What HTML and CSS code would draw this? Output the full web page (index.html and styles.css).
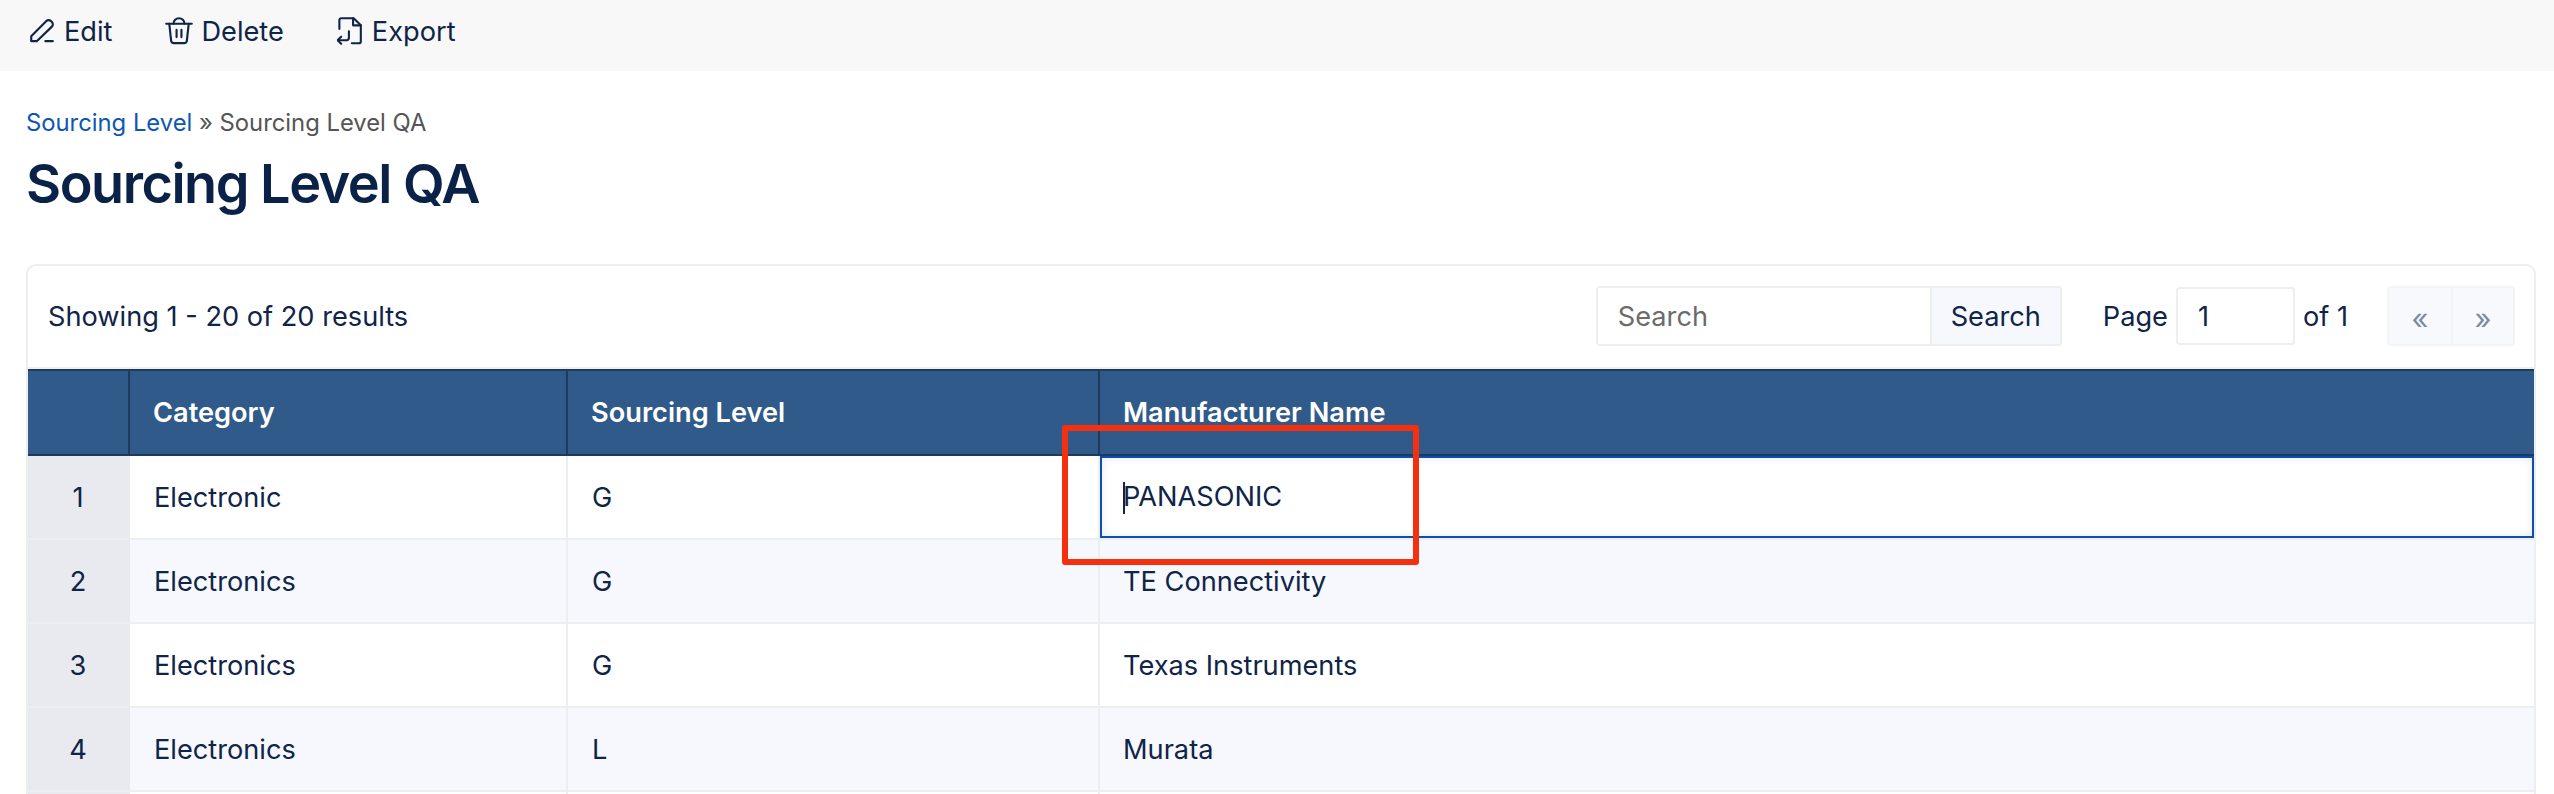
FILE: index.html
```html
<!DOCTYPE html>
<html lang="en">
<head>
<meta charset="utf-8">
<title>Sourcing Level QA</title>
<link rel="stylesheet" href="styles.css">
</head>
<body>
<nav class="actions">
  <a class="action action-edit">
    <svg class="icon icon-edit" viewBox="2.500 3 19.500 18.500"><path d="M3.500 20.500v-4L15.800 4.200a2.600 2.600 0 0 1 3.700 0l.8.8a2.600 2.600 0 0 1 0 3.700L8 20.500z"/><path d="M15 20.500h6"/></svg>
    <span>Edit</span>
  </a>
  <a class="action action-delete">
    <svg class="icon icon-delete" viewBox="0.500 0.500 23 23"><path d="M1.500 6h21"/><path d="M4 6l1.600 14.500a2 2 0 0 0 2 1.500h8.800a2 2 0 0 0 2-1.500L20 6"/><path d="M7.500 6C7.500 3.500 9.500 1.500 12 1.500s4.500 2 4.500 4.500"/><path d="M10 11v6M14 11v6"/></svg>
    <span>Delete</span>
  </a>
  <a class="action action-export">
    <svg class="icon icon-export" viewBox="1 1 21 23.500"><path d="M3 11V3.500A1.500 1.500 0 0 1 4.500 2H15l6 6v13.500a1.500 1.500 0 0 1-1.500 1.500h-6"/><path d="M14.500 2v6H21"/><path d="M11 13v5.500a2 2 0 0 1-2 2H1.500"/><path d="M4.500 17.500l-3 3 3 3"/></svg>
    <span>Export</span>
  </a>
</nav>

<main class="content">
  <p class="breadcrumb"><a class="crumb-link">Sourcing Level</a> » Sourcing Level QA</p>
  <h1 class="title">Sourcing Level QA</h1>

  <section class="card">
    <div class="card-bar">
      <span class="results">Showing 1 - 20 of 20 results</span>
      <div class="search">
        <input class="search-input" type="text" placeholder="Search">
        <button class="search-btn" type="button">Search</button>
      </div>
      <div class="page-jump">
        <span>Page</span>
        <input class="page-input" type="text" value="1">
        <span>of 1</span>
      </div>
      <div class="pager">
        <button class="pager-btn" type="button">«</button>
        <button class="pager-btn" type="button">»</button>
      </div>
    </div>

    <table class="grid">
      <colgroup>
        <col class="col-num"><col class="col-cat"><col class="col-level"><col class="col-name">
      </colgroup>
      <thead>
        <tr><th></th><th>Category</th><th>Sourcing Level</th><th>Manufacturer Name</th></tr>
      </thead>
      <tbody>
        <tr><td class="num">1</td><td>Electronic</td><td>G</td><td class="focused"><span class="caret"></span>PANASONIC</td></tr>
        <tr class="alt"><td class="num">2</td><td>Electronics</td><td>G</td><td>TE Connectivity</td></tr>
        <tr><td class="num">3</td><td>Electronics</td><td>G</td><td>Texas Instruments</td></tr>
        <tr class="alt"><td class="num">4</td><td>Electronics</td><td>L</td><td>Murata</td></tr>
        <tr><td class="num"></td><td></td><td></td><td></td></tr>
      </tbody>
    </table>
  </section>
</main>

<div class="annotation"></div>
</body>
</html>
```

FILE: styles.css
```css
* { box-sizing: border-box; }

html, body {
  margin: 0;
  height: 794px;
  overflow: hidden;
  background: #fff;
}

body {
  position: relative;
  font-family: Inter, "Liberation Sans", sans-serif;
  font-size: 27.2px;
  color: #0f2447;
}

.actions {
  display: flex;
  align-items: center;
  height: 71px;
  padding: 0 0 9px 30px;
  background: #f8f8f9;
}

.action {
  display: flex;
  align-items: center;
  gap: 10px;
  margin-right: 53px;
}

.action-delete { gap: 8px; }

.icon {
  fill: none;
  stroke: #0f2447;
  stroke-width: 1.75;
  stroke-linecap: round;
  stroke-linejoin: round;
}

.icon-edit { width: 24px; height: 24px; }
.icon-delete { width: 28px; height: 28px; }
.icon-export { width: 25px; height: 28px; }

.content {
  padding: 37px 18px 0 26px;
}

.breadcrumb {
  margin: 0;
  font-size: 23.8px;
  line-height: 30px;
  color: #555;
}

.crumb-link { color: #0f56b3; }

.title {
  margin: 15px 0 0;
  font-size: 54px;
  line-height: 62px;
  font-weight: 600;
  letter-spacing: -1.47px;
  color: #0b2248;
}

.card {
  margin-top: 49px;
  border: 2px solid #eceef0;
  border-bottom: 0;
  border-radius: 10px 10px 0 0;
  overflow: hidden;
}

.card-bar {
  display: flex;
  align-items: center;
  height: 103px;
  padding: 0 19px 1px 20px;
  border-bottom: 2px solid #eceef0;
}

.results {
  margin-right: auto;
  padding-top: 1px;
}

.search {
  display: flex;
  height: 60px;
  border: 2px solid #eceef0;
  border-radius: 4px;
}

.search-input {
  width: 332px;
  padding: 0 20px;
  border: 0;
  font: inherit;
  color: inherit;
  background: #fff;
}

.search-input::placeholder { color: #6b6b6b; opacity: 1; }

.search-btn {
  width: 130px;
  padding: 0;
  border: 0;
  border-left: 2px solid #eceef0;
  font: inherit;
  color: inherit;
  background: #f6f8fd;
}

.page-jump {
  display: flex;
  align-items: center;
  gap: 8px;
  margin-left: 41px;
}

.page-input {
  width: 119px;
  height: 58px;
  padding: 0 20px;
  border: 2px solid #eceef0;
  border-radius: 4px;
  font: inherit;
  color: inherit;
}

.pager {
  display: flex;
  height: 60px;
  margin-left: 39px;
  border: 2px solid #f3f4f8;
  border-radius: 4px;
  background: #f8f9fd;
}

.pager-btn {
  width: 62px;
  padding: 4px 0 0;
  border: 0;
  font: inherit;
  font-size: 29px;
  color: #7d8aa0;
  background: transparent;
}

.pager-btn + .pager-btn { border-left: 2px solid #f3f4f8; }

.grid {
  width: 100%;
  border-collapse: collapse;
  table-layout: fixed;
}

.col-num { width: 101px; }
.col-cat { width: 438px; }
.col-level { width: 532px; }

.grid th,
.grid td {
  height: 84px;
  padding: 0 24px;
  text-align: left;
}

.grid th {
  height: 85px;
  padding-left: 23px;
  background: #2f5a8a;
  border: 2px solid #1f3a5c;
  color: #fff;
  font-weight: 600;
}

.grid th:first-child,
.grid td:first-child { border-left: 0; }
.grid th:last-child,
.grid td:last-child { border-right: 0; }

.grid td {
  border-right: 2px solid #eceef0;
  border-bottom: 2px solid #eceef0;
}

.grid td:last-child { padding-left: 23px; }

.grid .num {
  padding: 0;
  text-align: center;
  background: #e8eaef;
  border-right: 2px solid #e8eaef;
}

.alt td { background: #f6f8fd; }

.grid .focused {
  box-shadow: inset 0 0 0 2px #0b4fb3, inset 0 0 8px 2px #e6e8ee;
}

.caret {
  display: inline-block;
  width: 2px;
  height: 32px;
  margin-right: -2px;
  vertical-align: middle;
  background: #0f2447;
}

.annotation {
  position: absolute;
  left: 1062px;
  top: 425px;
  width: 357px;
  height: 140px;
  border: 6px solid #f5300f;
  border-radius: 3px;
}
```
